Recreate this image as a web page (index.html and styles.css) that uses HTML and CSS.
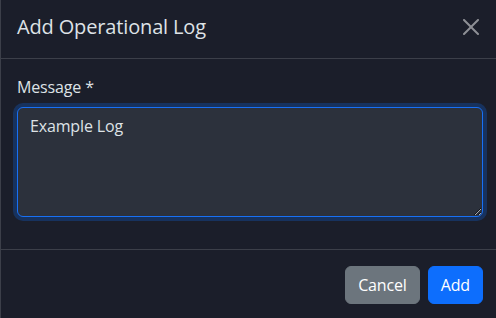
FILE: index.html
```html
<!DOCTYPE html>
<html lang="en">
<head>
<meta charset="utf-8">
<title>Add Operational Log</title>
<link rel="stylesheet" href="styles.css">
</head>
<body>
<div class="modal" role="dialog" aria-labelledby="modal-title">
  <div class="modal-header">
    <h5 class="modal-title" id="modal-title">Add Operational Log</h5>
    <button type="button" class="btn-close" aria-label="Close">
      <svg viewBox="0 0 16 16" width="16" height="16" aria-hidden="true"><path fill="#fff" d="M.293.293a1 1 0 0 1 1.414 0L8 6.586 14.293.293a1 1 0 1 1 1.414 1.414L9.414 8l6.293 6.293a1 1 0 0 1-1.414 1.414L8 9.414l-6.293 6.293a1 1 0 0 1-1.414-1.414L6.586 8 .293 1.707a1 1 0 0 1 0-1.414"/></svg>
    </button>
  </div>
  <div class="modal-body">
    <div class="form-group">
      <label class="form-label" for="message">Message *</label>
      <textarea class="form-control is-focused" id="message" rows="4" autofocus>Example Log</textarea>
    </div>
  </div>
  <div class="modal-footer">
    <button type="button" class="btn btn-secondary">Cancel</button>
    <button type="button" class="btn btn-primary">Add</button>
  </div>
</div>
<script src="script.js"></script>
</body>
</html>
```
FILE: styles.css
```css
* { box-sizing: border-box; }
html, body {
  margin: 0;
  background: #1b1e2a;
  overflow: hidden;
}
body {
  font-family: "Open Sans", "Noto Sans", sans-serif;
  font-size: 16px;
  line-height: 1.5;
  letter-spacing: -0.15px;
  color: #dee2e6;
}
.modal {
  width: 500px;
  background: #1b1e2a;
  border: 1px solid rgba(255, 255, 255, 0.15);
  border-top: 0;
}
.modal-header {
  display: flex;
  align-items: center;
  padding: 12px 16px 16px;
  border-bottom: 1px solid rgba(255, 255, 255, 0.15);
}
.modal-title {
  margin: 0;
  font-size: 20px;
  font-weight: 500;
  line-height: 30px;
  color: #dee2e6;
}
.btn-close {
  margin: -8px -8px -8px auto;
  padding: 8px 12px 8px 8px;
  width: 36px;
  height: 32px;
  border: 0;
  background: transparent;
  opacity: 0.5;
  display: flex;
  align-items: center;
  justify-content: center;
  cursor: pointer;
}
.btn-close svg { display: block; width: 16px; height: 16px; }
.modal-body {
  padding: 16px;
}
.form-group {
  margin-bottom: 16px;
}
.form-label {
  display: block;
  margin-bottom: 8px;
  color: #dee2e6;
}
.form-control {
  display: block;
  width: 100%;
  height: 110px;
  padding: 6px 12px;
  font: inherit;
  letter-spacing: inherit;
  line-height: 24px;
  color: #dee2e6;
  background: #2c313c;
  border: 1px solid #495057;
  border-radius: 6px;
  resize: vertical;
  outline: none;
  caret-color: #dee2e6;
}
.form-control.is-focused,
.form-control:focus {
  border-color: #1870f5;
  box-shadow: 0 0 0 4px rgba(13, 110, 253, 0.25);
}
.modal-footer {
  display: flex;
  justify-content: flex-end;
  align-items: center;
  padding: 12px;
  border-top: 1px solid rgba(255, 255, 255, 0.15);
}
.btn {
  margin: 4px;
  padding: 6px 12px;
  font: inherit;
  letter-spacing: inherit;
  line-height: 24px;
  color: #fff;
  border: 1px solid transparent;
  border-radius: 6px;
  cursor: pointer;
}
.btn-secondary { background: #6c757d; border-color: #6c757d; }
.btn-primary { background: #0d6efd; border-color: #0d6efd; }
```
FILE: script.js
```js
var ta = document.getElementById('message');
ta.focus();
ta.setSelectionRange(ta.value.length, ta.value.length);
```
